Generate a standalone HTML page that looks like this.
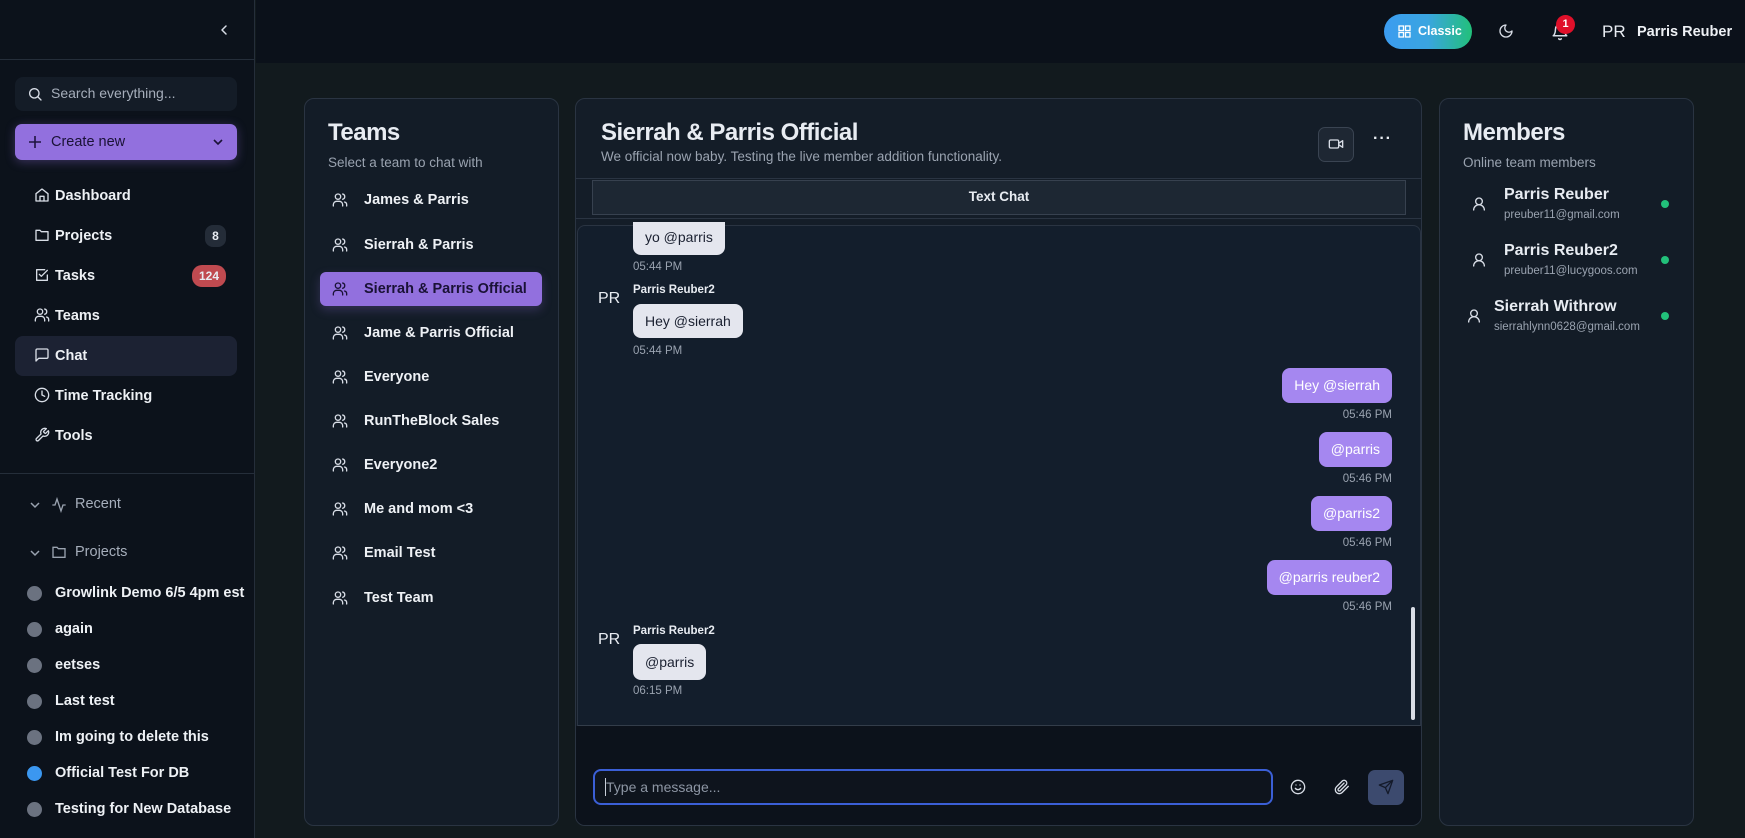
<!DOCTYPE html>
<html><head><meta charset="utf-8"><style>
*{box-sizing:border-box;margin:0;padding:0}
body{width:1745px;height:838px;overflow:hidden;background:#121a1e;font-family:"Liberation Sans",sans-serif;color:#e8ecf2;position:relative}
.a{position:absolute}
svg{display:block}
.ic{fill:none;stroke:#d8dde6;stroke-width:2;stroke-linecap:round;stroke-linejoin:round}
.nav{position:absolute;left:34px;font-size:14.5px;font-weight:bold;color:#eef1f5;height:20px;line-height:20px}
.nav svg{position:absolute;left:0;top:1px}
.nav span{position:absolute;left:21px;white-space:nowrap}
.proj{position:absolute;left:27px;font-size:14.5px;font-weight:bold;color:#eef1f5;height:20px;line-height:20px;white-space:nowrap}
.proj i{position:absolute;left:0;top:3px;width:15px;height:15px;border-radius:50%;background:#6b7280}
.proj span{position:absolute;left:28px}
.panel{position:absolute;background:#131c27;border:1px solid #2a3442;border-radius:10px}
.team{position:absolute;left:16px;width:222px;height:34px;font-size:14.5px;font-weight:bold;color:#eef1f5;line-height:34px;border-radius:6px}
.team svg{position:absolute;left:12px;top:9px}
.team span{position:absolute;left:44px;white-space:nowrap}
.bub{position:absolute;border-radius:8px;font-size:14px;line-height:34px;padding:0 12px;white-space:nowrap}
.rx{background:#e4e6ee;color:#1a2030}
.tx{background:#a587f0;color:#fff}
.tm{position:absolute;font-size:11.5px;color:#9aa3b0;white-space:nowrap}
.pr{position:absolute;left:598px;font-size:16px;color:#e8ecf2}
.nm{position:absolute;left:633px;font-size:11.5px;font-weight:bold;color:#e8ecf2}
</style></head><body>

<!-- sidebar -->
<div class="a" style="left:0;top:0;width:255px;height:838px;background:#0c121b;border-right:1px solid #252e3a"></div>
<div class="a" style="left:0;top:59px;width:255px;height:1px;background:#252e3a"></div>
<svg class="a ic" style="left:218px;top:24px" width="12" height="12" viewBox="0 0 12 12"><path d="M8 2L4 6l4 4" stroke-width="1.5"/></svg>
<div class="a" style="left:15px;top:77px;width:222px;height:34px;background:#141c27;border-radius:8px"></div>
<svg class="a ic" style="left:27px;top:86px" width="16" height="16" viewBox="0 0 24 24"><circle cx="11" cy="11" r="7"/><path d="M21 21l-4.3-4.3"/></svg>
<div class="a" style="left:51px;top:85px;font-size:14px;color:#a6aebb">Search everything...</div>
<div class="a" style="left:15px;top:124px;width:222px;height:36px;background:#9270de;border-radius:7px;box-shadow:0 2px 10px rgba(146,112,222,.35)"></div>
<svg class="a" style="left:28px;top:135px" width="14" height="14" viewBox="0 0 14 14"><path d="M7 1v12M1 7h12" stroke="#1f1440" stroke-width="1.6"/></svg>
<div class="a" style="left:51px;top:134px;font-size:14.5px;color:#1a1236">Create new</div>
<svg class="a" style="left:212px;top:137px" width="12" height="10" viewBox="0 0 12 10"><path d="M2 3l4 4 4-4" stroke="#1a1236" stroke-width="1.6" fill="none"/></svg>

<div class="a" style="left:15px;top:336px;width:222px;height:40px;background:#1c2233;border-radius:8px"></div>
<div class="nav" style="top:186px"><svg class="ic" width="16" height="16" viewBox="0 0 24 24"><path d="M3 10l9-7 9 7v11H3z"/><path d="M9 21v-7h6v7"/></svg><span style="left:21px">Dashboard</span></div>
<div class="nav" style="top:226px"><svg class="ic" width="16" height="16" viewBox="0 0 24 24"><path d="M3 5h6l2 2h10v13H3z"/></svg><span>Projects</span></div>
<div class="a" style="left:205px;top:225px;width:21px;height:22px;border-radius:8px;background:#242c38;font-size:12px;font-weight:bold;line-height:22px;text-align:center">8</div>
<div class="nav" style="top:266px"><svg class="ic" width="16" height="16" viewBox="0 0 24 24"><path d="M20 12v8H4V4h12"/><path d="M8 11l3 3 9-9"/></svg><span>Tasks</span></div>
<div class="a" style="left:192px;top:265px;width:34px;height:22px;border-radius:10px;background:#c04a50;font-size:12px;font-weight:bold;line-height:22px;text-align:center">124</div>
<div class="nav" style="top:306px"><svg class="ic" width="16" height="16" viewBox="0 0 24 24"><circle cx="9" cy="7" r="4"/><path d="M2 21v-2a5 5 0 0 1 5-5h4a5 5 0 0 1 5 5v2M16 3.1a4 4 0 0 1 0 7.8M22 21v-2a4 4 0 0 0-3-3.9"/></svg><span>Teams</span></div>
<div class="nav" style="top:346px"><svg class="ic" width="16" height="16" viewBox="0 0 24 24"><path d="M21 15a2 2 0 0 1-2 2H7l-4 4V5a2 2 0 0 1 2-2h14a2 2 0 0 1 2 2z"/></svg><span>Chat</span></div>
<div class="nav" style="top:386px"><svg class="ic" width="16" height="16" viewBox="0 0 24 24"><circle cx="12" cy="12" r="10"/><path d="M12 6v6l4 2"/></svg><span>Time Tracking</span></div>
<div class="nav" style="top:426px"><svg class="ic" width="16" height="16" viewBox="0 0 24 24"><path d="M14.7 6.3a1 1 0 0 0 0 1.4l1.6 1.6a1 1 0 0 0 1.4 0l3.8-3.8a6 6 0 0 1-7.9 7.9l-6.9 6.9a2.1 2.1 0 0 1-3-3l6.9-6.9a6 6 0 0 1 7.9-7.9z"/></svg><span>Tools</span></div>
<div class="a" style="left:0;top:473px;width:255px;height:1px;background:#252e3a"></div>
<svg class="a" style="left:29px;top:500px" width="12" height="10" viewBox="0 0 12 10"><path d="M2 3l4 4 4-4" stroke="#9aa3b0" stroke-width="1.5" fill="none"/></svg>
<svg class="a" style="left:51px;top:497px" width="16" height="16" viewBox="0 0 24 24" fill="none" stroke="#9aa3b0" stroke-width="2"><path d="M22 12h-4l-3 9L9 3l-3 9H2"/></svg>
<div class="a" style="left:75px;top:496px;font-size:14.5px;color:#a6aebb">Recent</div>
<svg class="a" style="left:29px;top:548px" width="12" height="10" viewBox="0 0 12 10"><path d="M2 3l4 4 4-4" stroke="#9aa3b0" stroke-width="1.5" fill="none"/></svg>
<svg class="a" style="left:51px;top:544px" width="16" height="16" viewBox="0 0 24 24" fill="none" stroke="#9aa3b0" stroke-width="2"><path d="M3 5h6l2 2h10v13H3z"/></svg>
<div class="a" style="left:75px;top:544px;font-size:14.5px;color:#a6aebb">Projects</div>
<div class="proj" style="top:583px"><i></i><span>Growlink Demo 6/5 4pm est</span></div>
<div class="proj" style="top:619px"><i></i><span>again</span></div>
<div class="proj" style="top:655px"><i></i><span>eetses</span></div>
<div class="proj" style="top:691px"><i></i><span>Last test</span></div>
<div class="proj" style="top:727px"><i></i><span>Im going to delete this</span></div>
<div class="proj" style="top:763px"><i style="background:#3b97f0"></i><span>Official Test For DB</span></div>
<div class="proj" style="top:799px"><i></i><span>Testing for New Database</span></div>

<!-- header -->
<div class="a" style="left:256px;top:0;width:1489px;height:63px;background:#0b111a"></div>
<div class="a" style="left:1384px;top:14px;width:88px;height:35px;border-radius:18px;background:linear-gradient(90deg,#3b9cf0 0%,#3aa5e0 50%,#22c07a 100%)"></div>
<svg class="a" style="left:1398px;top:25px" width="13" height="13" viewBox="0 0 13 13" fill="none" stroke="#fff" stroke-width="1.3"><rect x="1" y="1" width="4.5" height="4.5"/><rect x="7.5" y="1" width="4.5" height="4.5"/><rect x="1" y="7.5" width="4.5" height="4.5"/><rect x="7.5" y="7.5" width="4.5" height="4.5"/></svg>
<div class="a" style="left:1418px;top:24px;font-size:12.5px;font-weight:bold;color:#fff">Classic</div>
<svg class="a ic" style="left:1498px;top:23px" width="16" height="16" viewBox="0 0 24 24"><path d="M12 3a6 6 0 0 0 9 9 9 9 0 1 1-9-9z"/></svg>
<svg class="a ic" style="left:1551px;top:23px" width="18" height="18" viewBox="0 0 24 24"><path d="M6 8a6 6 0 0 1 12 0c0 7 3 9 3 9H3s3-2 3-9M10.3 21a1.9 1.9 0 0 0 3.4 0"/></svg>
<div class="a" style="left:1556px;top:15px;width:19px;height:19px;border-radius:50%;background:#e0102a;font-size:11px;font-weight:bold;color:#fff;text-align:center;line-height:19px">1</div>
<div class="a" style="left:1602px;top:22px;font-size:17px;color:#e8ecf2">PR</div>
<div class="a" style="left:1637px;top:24px;font-size:14.5px;font-weight:bold;color:#eef1f5">Parris Reuber</div>

<!-- Teams panel -->
<div class="panel" style="left:304px;top:98px;width:255px;height:728px">
  <div class="a" style="left:23px;top:20px;font-size:24px;font-weight:bold;letter-spacing:-.5px">Teams</div>
  <div class="a" style="left:23px;top:56px;font-size:13.5px;color:#9aa3b0">Select a team to chat with</div>
  <div class="team" style="top:173px;left:15px;background:#9270de;box-shadow:0 4px 10px rgba(146,112,222,.25);color:#1a1236"></div>
</div>
<div class="a" style="left:304px;top:98px">
<div class="team" style="top:85px"><svg class="ic" width="16" height="16" viewBox="0 0 24 24"><circle cx="9" cy="7" r="4"/><path d="M2 21v-2a5 5 0 0 1 5-5h4a5 5 0 0 1 5 5v2M16 3.1a4 4 0 0 1 0 7.8M22 21v-2a4 4 0 0 0-3-3.9"/></svg><span>James &amp; Parris</span></div>
<div class="team" style="top:130px"><svg class="ic" width="16" height="16" viewBox="0 0 24 24"><circle cx="9" cy="7" r="4"/><path d="M2 21v-2a5 5 0 0 1 5-5h4a5 5 0 0 1 5 5v2M16 3.1a4 4 0 0 1 0 7.8M22 21v-2a4 4 0 0 0-3-3.9"/></svg><span>Sierrah &amp; Parris</span></div>
<div class="team" style="top:174px;color:#1a1236"><svg class="ic" style="stroke:#1a1236" width="16" height="16" viewBox="0 0 24 24"><circle cx="9" cy="7" r="4"/><path d="M2 21v-2a5 5 0 0 1 5-5h4a5 5 0 0 1 5 5v2M16 3.1a4 4 0 0 1 0 7.8M22 21v-2a4 4 0 0 0-3-3.9"/></svg><span>Sierrah &amp; Parris Official</span></div>
<div class="team" style="top:218px"><svg class="ic" width="16" height="16" viewBox="0 0 24 24"><circle cx="9" cy="7" r="4"/><path d="M2 21v-2a5 5 0 0 1 5-5h4a5 5 0 0 1 5 5v2M16 3.1a4 4 0 0 1 0 7.8M22 21v-2a4 4 0 0 0-3-3.9"/></svg><span>Jame &amp; Parris Official</span></div>
<div class="team" style="top:262px"><svg class="ic" width="16" height="16" viewBox="0 0 24 24"><circle cx="9" cy="7" r="4"/><path d="M2 21v-2a5 5 0 0 1 5-5h4a5 5 0 0 1 5 5v2M16 3.1a4 4 0 0 1 0 7.8M22 21v-2a4 4 0 0 0-3-3.9"/></svg><span>Everyone</span></div>
<div class="team" style="top:306px"><svg class="ic" width="16" height="16" viewBox="0 0 24 24"><circle cx="9" cy="7" r="4"/><path d="M2 21v-2a5 5 0 0 1 5-5h4a5 5 0 0 1 5 5v2M16 3.1a4 4 0 0 1 0 7.8M22 21v-2a4 4 0 0 0-3-3.9"/></svg><span>RunTheBlock Sales</span></div>
<div class="team" style="top:350px"><svg class="ic" width="16" height="16" viewBox="0 0 24 24"><circle cx="9" cy="7" r="4"/><path d="M2 21v-2a5 5 0 0 1 5-5h4a5 5 0 0 1 5 5v2M16 3.1a4 4 0 0 1 0 7.8M22 21v-2a4 4 0 0 0-3-3.9"/></svg><span>Everyone2</span></div>
<div class="team" style="top:394px"><svg class="ic" width="16" height="16" viewBox="0 0 24 24"><circle cx="9" cy="7" r="4"/><path d="M2 21v-2a5 5 0 0 1 5-5h4a5 5 0 0 1 5 5v2M16 3.1a4 4 0 0 1 0 7.8M22 21v-2a4 4 0 0 0-3-3.9"/></svg><span>Me and mom &lt;3</span></div>
<div class="team" style="top:438px"><svg class="ic" width="16" height="16" viewBox="0 0 24 24"><circle cx="9" cy="7" r="4"/><path d="M2 21v-2a5 5 0 0 1 5-5h4a5 5 0 0 1 5 5v2M16 3.1a4 4 0 0 1 0 7.8M22 21v-2a4 4 0 0 0-3-3.9"/></svg><span>Email Test</span></div>
<div class="team" style="top:483px"><svg class="ic" width="16" height="16" viewBox="0 0 24 24"><circle cx="9" cy="7" r="4"/><path d="M2 21v-2a5 5 0 0 1 5-5h4a5 5 0 0 1 5 5v2M16 3.1a4 4 0 0 1 0 7.8M22 21v-2a4 4 0 0 0-3-3.9"/></svg><span>Test Team</span></div>
</div>

<!-- Chat panel -->
<div class="panel" style="left:575px;top:98px;width:847px;height:728px;overflow:hidden;background:#141d28">
  <div class="a" style="left:25px;top:20px;font-size:24px;font-weight:bold;letter-spacing:-.5px">Sierrah &amp; Parris Official</div>
  <div class="a" style="left:25px;top:50px;font-size:13.5px;color:#9aa3b0">We official now baby. Testing the live member addition functionality.</div>
  <div class="a" style="left:742px;top:28px;width:36px;height:35px;border-radius:7px;background:#1e2733;border:1px solid #3a4452"></div>
  <svg class="a ic" style="left:752px;top:37px" width="16" height="16" viewBox="0 0 24 24"><rect x="2" y="6" width="14" height="12" rx="2"/><path d="M16 13l6 4V7l-6 4"/></svg>
  <div class="a" style="left:797px;top:31px;font-size:16px;font-weight:bold;letter-spacing:1px">···</div>
  <div class="a" style="left:0;top:79px;width:847px;height:1px;background:#2a3442"></div>
  <div class="a" style="left:16px;top:81px;width:814px;height:35px;background:#1d2733;border:1px solid #37414f"></div>
  <div class="a" style="left:16px;top:90px;width:814px;text-align:center;font-size:13.5px;font-weight:bold">Text Chat</div>
  <div class="a" style="left:0;top:119px;width:847px;height:1px;background:#2a3442"></div>
  <div class="a" style="left:1px;top:126px;width:844px;height:501px;background:#131e2c;border:1px solid #2a3442;border-bottom-color:#333d4a;border-radius:8px 8px 0 0"></div>
  <div class="a" style="left:0;top:627px;width:847px;height:101px;background:#0c121b"></div>
</div>
<div class="a" style="left:1411px;top:607px;width:4px;height:113px;background:#d8dde6;border-radius:2px"></div>

<!-- messages -->
<div class="bub rx" style="left:633px;top:222px;height:33px;line-height:31px;border-radius:0 0 8px 8px">yo @parris</div>
<div class="tm" style="left:633px;top:261px">05:44 PM</div>
<div class="pr" style="top:290px">PR</div>
<div class="nm" style="top:284px">Parris Reuber2</div>
<div class="bub rx" style="left:633px;top:304px">Hey @sierrah</div>
<div class="tm" style="left:633px;top:345px">05:44 PM</div>

<div class="bub tx" style="right:353px;top:368px;height:35px">Hey @sierrah</div>
<div class="tm" style="right:353px;top:409px">05:46 PM</div>
<div class="bub tx" style="right:353px;top:432px;height:35px">@parris</div>
<div class="tm" style="right:353px;top:473px">05:46 PM</div>
<div class="bub tx" style="right:353px;top:496px;height:35px">@parris2</div>
<div class="tm" style="right:353px;top:537px">05:46 PM</div>
<div class="bub tx" style="right:353px;top:560px;height:35px">@parris reuber2</div>
<div class="tm" style="right:353px;top:601px">05:46 PM</div>

<div class="pr" style="top:631px">PR</div>
<div class="nm" style="top:625px">Parris Reuber2</div>
<div class="bub rx" style="left:633px;top:644px;height:36px;line-height:36px">@parris</div>
<div class="tm" style="left:633px;top:685px">06:15 PM</div>

<!-- input -->
<div class="a" style="left:593px;top:769px;width:680px;height:36px;border:2px solid #3b5fd6;border-radius:8px;background:#0e141d"></div>
<div class="a" style="left:605px;top:778px;width:1px;height:18px;background:#c8ced8"></div>
<div class="a" style="left:606px;top:779px;font-size:14px;color:#8d96a4">Type a message...</div>
<svg class="a ic" style="left:1290px;top:779px" width="16" height="16" viewBox="0 0 24 24"><circle cx="12" cy="12" r="10"/><path d="M8 14s1.5 2 4 2 4-2 4-2M9 9h.01M15 9h.01"/></svg>
<svg class="a ic" style="left:1334px;top:779px" width="16" height="16" viewBox="0 0 24 24"><path d="M21.4 11.05l-9.19 9.19a6 6 0 0 1-8.49-8.49l8.57-8.57A4 4 0 1 1 18 8.84l-8.59 8.57a2 2 0 0 1-2.83-2.830l8.49-8.48"/></svg>
<div class="a" style="left:1368px;top:770px;width:36px;height:35px;border-radius:7px;background:#3c4a6e"></div>
<svg class="a" style="left:1378px;top:779px" width="16" height="16" viewBox="0 0 24 24" fill="none" stroke="#141a2a" stroke-width="2" stroke-linejoin="round"><path d="M22 2L11 13M22 2l-7 20-4-9-9-4z"/></svg>

<!-- Members -->
<div class="panel" style="left:1439px;top:98px;width:255px;height:728px">
  <div class="a" style="left:23px;top:20px;font-size:24px;font-weight:bold;letter-spacing:-.5px">Members</div>
  <div class="a" style="left:23px;top:56px;font-size:13.5px;color:#9aa3b0">Online team members</div>
</div>
<svg class="a ic" style="left:1471px;top:196px" width="16" height="16" viewBox="0 0 24 24"><circle cx="12" cy="8" r="5"/><path d="M20 21a8 8 0 0 0-16 0"/></svg>
<div class="a" style="left:1504px;top:186px;font-size:16px;font-weight:bold">Parris Reuber</div>
<div class="a" style="left:1504px;top:209px;font-size:11.5px;color:#9aa3b0">preuber11@gmail.com</div>
<div class="a" style="left:1661px;top:200px;width:8px;height:8px;border-radius:50%;background:#22c07a"></div>
<svg class="a ic" style="left:1471px;top:252px" width="16" height="16" viewBox="0 0 24 24"><circle cx="12" cy="8" r="5"/><path d="M20 21a8 8 0 0 0-16 0"/></svg>
<div class="a" style="left:1504px;top:242px;font-size:16px;font-weight:bold">Parris Reuber2</div>
<div class="a" style="left:1504px;top:265px;font-size:11.5px;color:#9aa3b0">preuber11@lucygoos.com</div>
<div class="a" style="left:1661px;top:256px;width:8px;height:8px;border-radius:50%;background:#22c07a"></div>
<svg class="a ic" style="left:1466px;top:308px" width="16" height="16" viewBox="0 0 24 24"><circle cx="12" cy="8" r="5"/><path d="M20 21a8 8 0 0 0-16 0"/></svg>
<div class="a" style="left:1494px;top:298px;font-size:16px;font-weight:bold">Sierrah Withrow</div>
<div class="a" style="left:1494px;top:321px;font-size:11.5px;color:#9aa3b0">sierrahlynn0628@gmail.com</div>
<div class="a" style="left:1661px;top:312px;width:8px;height:8px;border-radius:50%;background:#22c07a"></div>
</body></html>
